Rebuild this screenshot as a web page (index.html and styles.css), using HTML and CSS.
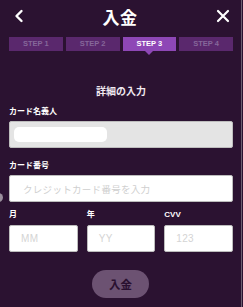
FILE: index.html
```html
<!DOCTYPE html>
<html lang="ja">
<head>
<meta charset="utf-8">
<link rel="stylesheet" href="styles.css">
</head>
<body>
<div class="page">
  <header class="header">
    <svg class="back" width="10" height="14" viewBox="0 0 10 14"><path d="M7.5 2 L2.5 7 L7.5 12" fill="none" stroke="#fff" stroke-width="2.4" stroke-linecap="round" stroke-linejoin="round"/></svg>
    <h1 class="title">入金</h1>
    <svg class="close" width="14" height="14" viewBox="0 0 14 14"><path d="M2 2 L12 12 M12 2 L2 12" fill="none" stroke="#fff" stroke-width="2.2" stroke-linecap="round"/></svg>
  </header>
  <nav class="steps">
    <div class="step">STEP 1</div>
    <div class="step">STEP 2</div>
    <div class="step active">STEP 3</div>
    <div class="step">STEP 4</div>
  </nav>
  <h2 class="section">詳細の入力</h2>
  <div class="field">
    <label class="label">カード名義人</label>
    <div class="input filled"><span class="pill"></span></div>
  </div>
  <div class="field">
    <label class="label">カード番号</label>
    <div class="input"><span class="ph">クレジットカード番号を入力</span></div>
  </div>
  <div class="row">
    <div class="col">
      <label class="label">月</label>
      <div class="input small"><span class="ph latin">MM</span></div>
    </div>
    <div class="col">
      <label class="label">年</label>
      <div class="input small"><span class="ph latin">YY</span></div>
    </div>
    <div class="col">
      <label class="label">CVV</label>
      <div class="input small"><span class="ph latin">123</span></div>
    </div>
  </div>
  <div class="actions"><button class="submit">入金</button></div>
  <span class="dot"></span>
</div>
</body>
</html>
```
FILE: styles.css
```css
html, body { margin: 0; padding: 0; }
body {
  width: 243px; height: 307px; overflow: hidden;
  background: #2b1231;
  font-family: "Noto Sans CJK JP", "Noto Sans", sans-serif;
}
.page {
  position: relative;
  height: 307px;
  box-sizing: border-box;
  padding: 0 8px 0 9px;
  border-right: 1px solid #6d6070;
  width: 242px;
}
.header {
  height: 32px;
  display: flex; align-items: center; justify-content: space-between;
  padding: 0 3px 0 5px;
}
.title {
  margin: 0; color: #fff; font-size: 17px; font-weight: 700; line-height: 1;
  letter-spacing: 0.5px;
}
.steps {
  margin-top: 5px;
  display: grid; grid-template-columns: repeat(4, 1fr); gap: 3px;
}
.step {
  position: relative;
  height: 14px; line-height: 14px;
  background: #5a286d; color: #86679a;
  font-family: "Liberation Sans", Arial, sans-serif;
  font-size: 7.5px; font-weight: 700; text-align: center;
}
.step.active { background: #8e47b6; color: #fff; }
.step.active::after {
  content: ""; position: absolute; left: 50%; bottom: -4px; margin-left: -4px;
  border-left: 4px solid transparent; border-right: 4px solid transparent;
  border-top: 4px solid #8e47b6;
}
.section {
  margin: 33px 0 0; text-align: center; color: #f0e8f0;
  font-size: 10px; font-weight: 700; line-height: 14px;
}
.field { margin-top: 7px; }
.field + .field { margin-top: 11px; }
.label {
  display: block; color: #fff; font-size: 8px; font-weight: 700; line-height: 11px;
  margin-bottom: 5px;
}
.input {
  height: 27px; box-sizing: border-box;
  background: #fff; border: 1px solid #bdbdbd; border-radius: 2px;
  display: flex; align-items: center; padding-left: 13px;
}
.input.filled { background: #e4e4e4; padding-left: 4px; }
.pill { width: 93px; height: 15px; border-radius: 5px; background: #fff; }
.ph { color: #cfcfcf; font-size: 9.5px; letter-spacing: 0.3px; }
.ph.latin { font-family: "Liberation Sans", Arial, sans-serif; font-size: 10px; color: #d4d4d4; }
.row {
  margin-top: 7px;
  display: grid; grid-template-columns: repeat(3, 1fr); gap: 9px;
}
.row .label { font-family: "Liberation Sans", "Noto Sans CJK JP", sans-serif; }
.input.small { padding-left: 11px; }
.actions { margin-top: 18px; display: flex; justify-content: center; }
.submit {
  width: 57px; height: 28px; border: 0; border-radius: 14px;
  background: #6c5272; color: #2a1030;
  font-family: "Noto Sans CJK JP", sans-serif; font-size: 11.5px; font-weight: 700;
  padding: 0; margin-left: -1px;
}
.dot {
  position: absolute; left: -6px; top: 193px;
  width: 9px; height: 9px; border-radius: 50%; background: #9a8f9c;
}
```
